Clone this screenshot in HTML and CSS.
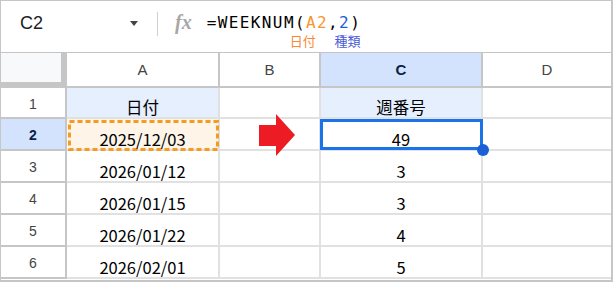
FILE: index.html
```html
<!DOCTYPE html>
<html lang="ja">
<head>
    <meta charset="UTF-8">
    <title>WEEKNUM</title>
    <link rel="stylesheet" href="styles.css">
</head>
<body>
    <div class="frame">
        <!-- 数式バー -->
        <div class="fbar">
            <div class="namebox">
                <span class="cellname">C2</span>
                <span class="caret"></span>
            </div>
            <div class="divider"></div>
            <div class="fx">fx</div>
            <div class="formula">
                <div class="fline">=WEEKNUM(<span class="arg1">A2</span>,<span class="arg2">2</span>)</div>
                <div class="hints">
                    <span class="hint1">日付</span>
                    <span class="hint2">種類</span>
                </div>
            </div>
        </div>

        <!-- シート -->
        <div class="sheet">
            <div class="corner"></div>
            <div class="colhdr">A</div>
            <div class="colhdr">B</div>
            <div class="colhdr active">C</div>
            <div class="colhdr last">D</div>

            <div class="rowhdr">1</div>
            <div class="cell head">日付</div>
            <div class="cell"></div>
            <div class="cell head">週番号</div>
            <div class="cell last"></div>

            <div class="rowhdr active">2</div>
            <div class="cell copied">
                <svg class="dash" width="153" height="32">
                    <rect x="2.5" y="2.5" width="148" height="28" fill="none" stroke="#f39c24" stroke-width="3" stroke-dasharray="5 3"/>
                </svg>
                <span>2025/12/03</span>
            </div>
            <div class="cell"></div>
            <div class="cell selected"><span>49</span><i class="handle"></i></div>
            <div class="cell last"></div>

            <div class="rowhdr">3</div>
            <div class="cell">2026/01/12</div>
            <div class="cell"></div>
            <div class="cell">3</div>
            <div class="cell last"></div>

            <div class="rowhdr">4</div>
            <div class="cell">2026/01/15</div>
            <div class="cell"></div>
            <div class="cell">3</div>
            <div class="cell last"></div>

            <div class="rowhdr">5</div>
            <div class="cell">2026/01/22</div>
            <div class="cell"></div>
            <div class="cell">4</div>
            <div class="cell last"></div>

            <div class="rowhdr">6</div>
            <div class="cell">2026/02/01</div>
            <div class="cell"></div>
            <div class="cell">5</div>
            <div class="cell last"></div>

            <!-- 矢印 -->
            <svg class="arrow" width="37" height="43" viewBox="0 0 37 43">
                <polygon points="0,11 17,11 17,0 36,21 17,42 17,32 0,32" fill="#ed1c24"/>
            </svg>
        </div>
    </div>
</body>
</html>
```

FILE: styles.css
```css
body {
    margin: 0;
    background: #fff;
}

.frame {
    width: 613px;
    height: 282px;
    box-sizing: border-box;
    border: 1px solid #c6c6c6;
    border-right-width: 2px;
    border-bottom-width: 2px;
    overflow: hidden;
    font-family: "Liberation Sans", Arial, sans-serif;
}

/* 数式バー */
.fbar {
    display: flex;
    align-items: flex-start;
    height: 51px;
    border-bottom: 1px solid #c4c4c4;
}

.namebox {
    display: flex;
    align-items: center;
    width: 137px;
    height: 24px;
    margin-top: 10px;
    padding-left: 19px;
    box-sizing: border-box;
}

.cellname {
    font-size: 18px;
    color: #202124;
    flex: 1;
}

.caret {
    width: 0;
    height: 0;
    border-left: 4px solid transparent;
    border-right: 4px solid transparent;
    border-top: 5px solid #444;
}

.divider {
    width: 1px;
    height: 24px;
    margin: 11px 0 0 19px;
    background: #d0d0d0;
}

.fx {
    margin: 9px 0 0 17px;
    font-family: "Liberation Serif", serif;
    font-style: italic;
    font-weight: bold;
    font-size: 20px;
    line-height: 24px;
    color: #a7a7a7;
}

.formula {
    margin: 11px 0 0 15px;
}

.fline {
    font-family: "DejaVu Sans Mono", monospace;
    font-size: 16px;
    letter-spacing: 1.4px;
    line-height: 22px;
    color: #000;
}

.arg1 { color: #f7962f; }
.arg2 { color: #1a5fd8; }

.hints {
    padding-left: 83px;
    font-family: "Noto Sans CJK JP", sans-serif;
    font-size: 13px;
    line-height: 14px;
}

.hint1 { color: #f98a35; }
.hint2 { color: #4b5bd6; margin-left: 16px; }

/* シート */
.sheet {
    position: relative;
    display: grid;
    grid-template-columns: 66px 153px 101px 162px 1fr;
    grid-template-rows: 35px 31px repeat(5, 32px);
}

.corner {
    background: #f8f9fa;
    border-right: 6px solid #c6c6c6;
    border-bottom: 6px solid #c6c6c6;
}

.colhdr {
    display: flex;
    align-items: center;
    justify-content: center;
    border-right: 2px solid #c6c6c6;
    border-bottom: 2px solid #c6c6c6;
    font-size: 15px;
    color: #444;
}

.colhdr.last { border-right: none; }

.colhdr.active,
.rowhdr.active {
    background: #d3e3fd;
    color: #0b1e46;
    font-weight: bold;
}

.rowhdr {
    display: flex;
    align-items: center;
    justify-content: center;
    padding-top: 2px;
    border-right: 2px solid #c6c6c6;
    border-bottom: 2px solid #c6c6c6;
    font-size: 14px;
    color: #444;
}

.cell {
    position: relative;
    display: flex;
    align-items: flex-end;
    justify-content: center;
    border-right: 2px solid #e1e1e1;
    border-bottom: 2px solid #e1e1e1;
    font-family: "Noto Sans CJK JP", sans-serif;
    font-size: 16.5px;
    line-height: 20px;
    color: #000;
}

.cell.last { border-right: none; }

.cell.head { background: #e5effd; }

.cell.copied {
    background: #fef4e8;
}

.cell.copied span { position: relative; }

.dash {
    position: absolute;
    left: 0;
    top: 0;
}

.cell.selected::after {
    content: '';
    position: absolute;
    left: -1px;
    top: 0;
    right: -2px;
    bottom: -1px;
    border: 3px solid #1a73e8;
}

.handle {
    position: absolute;
    right: -8px;
    bottom: -7px;
    width: 12px;
    height: 12px;
    border-radius: 50%;
    background: #1a5fd6;
    z-index: 1;
}

.arrow {
    position: absolute;
    left: 258px;
    top: 61px;
}
```
